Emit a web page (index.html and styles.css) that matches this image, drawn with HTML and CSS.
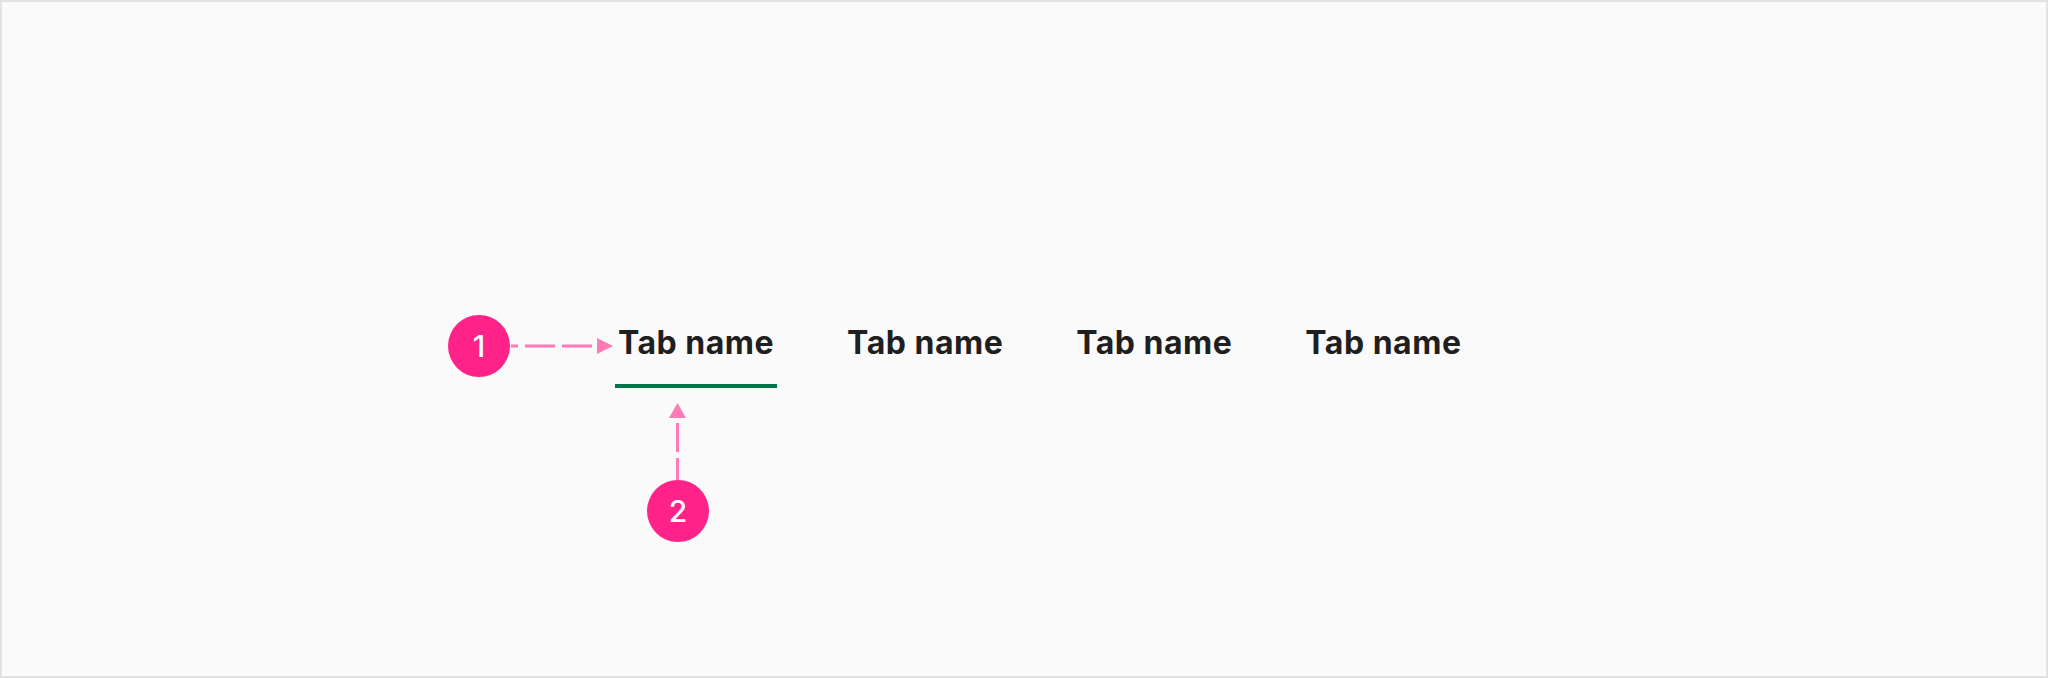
FILE: index.html
```html
<!DOCTYPE html>
<html lang="en">
<head>
    <meta charset="UTF-8">
    <meta name="viewport" content="width=device-width, initial-scale=1.0">
    <title>Tabs</title>
    <link rel="stylesheet" href="styles.css">
</head>
<body>

<div class="frame">

    <div class="tabs">
        <div class="tab tab-active">Tab name</div>
        <div class="tab">Tab name</div>
        <div class="tab">Tab name</div>
        <div class="tab">Tab name</div>
    </div>

    <!-- annotations -->
    <svg class="arrows" width="2044" height="674" viewBox="2 2 2044 674">
        <line x1="592" y1="346" x2="511" y2="346" class="dash" stroke-dasharray="30 7"/>
        <polygon points="597,338 613,346 597,354" class="head"/>
        <line x1="677.5" y1="423" x2="677.5" y2="482" class="dash" stroke-dasharray="29 6"/>
        <polygon points="677.5,403 686,418 669,418" class="head"/>
    </svg>
    <div class="marker marker-one">1</div>
    <div class="marker marker-two">2</div>

</div>

</body>
</html>
```

FILE: styles.css
```css
body {
    margin: 0;
    background: #fafafa;
}

.frame {
    position: relative;
    box-sizing: border-box;
    width: 2048px;
    height: 678px;
    border: 2px solid #e2e2e2;
    background: #fafafa;
    padding: 321px 0 0 613px;
    font-family: Inter, "Noto Sans", sans-serif;
}

.tabs {
    display: flex;
    gap: 67px;
}

.tab {
    padding: 0 3px 21px;
    border-bottom: 4px solid transparent;
    font-size: 32px;
    line-height: 40px;
    font-weight: 700;
    color: #1f1f1f;
    letter-spacing: 0.5px;
}

.tab-active {
    border-bottom-color: #00754a;
}

.arrows {
    position: absolute;
    left: 0;
    top: 0;
    pointer-events: none;
}

.dash {
    stroke: #ff7ab6;
    stroke-width: 3;
}

.head {
    fill: #ff7ab6;
}

.marker {
    position: absolute;
    width: 62px;
    height: 62px;
    border-radius: 50%;
    background: #ff2389;
    color: #fff;
    font-size: 30px;
    font-weight: 500;
    line-height: 62px;
    text-align: center;
}

.marker-one {
    left: 446px;
    top: 313px;
}

.marker-two {
    left: 645px;
    top: 478px;
}
```
